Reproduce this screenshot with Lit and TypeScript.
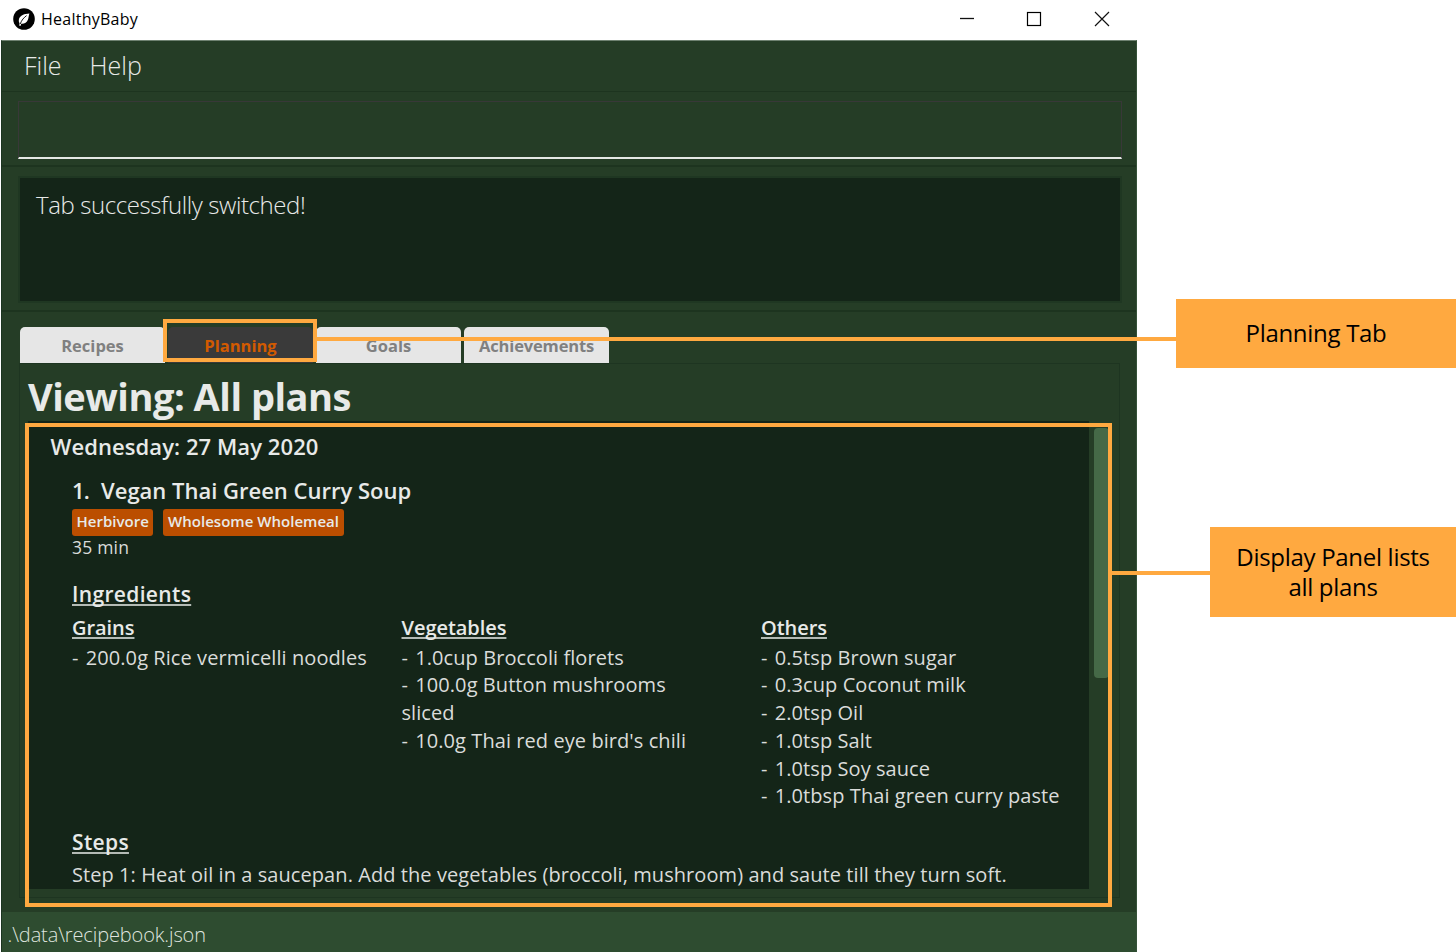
import { LitElement, html, css } from "lit";
import { customElement } from "lit/decorators.js";

interface Group {
  name: string;
  items: string[];
}

const TABS = ["Recipes", "Planning", "Goals", "Achievements"];
const TAGS = ["Herbivore", "Wholesome Wholemeal"];
const GROUPS: Group[] = [
  { name: "Grains", items: ["200.0g Rice vermicelli noodles"] },
  {
    name: "Vegetables",
    items: [
      "1.0cup Broccoli florets",
      "100.0g Button mushrooms sliced",
      "10.0g Thai red eye bird's chili",
    ],
  },
  {
    name: "Others",
    items: [
      "0.5tsp Brown sugar",
      "0.3cup Coconut milk",
      "2.0tsp Oil",
      "1.0tsp Salt",
      "1.0tsp Soy sauce",
      "1.0tbsp Thai green curry paste",
    ],
  },
];

@customElement("plan-card")
export class PlanCard extends LitElement {
  static styles = css`
    :host { display: block; }
    .name { display: flex; font-size: 22px; font-weight: 600; line-height: 30px; }
    .num { width: 29px; letter-spacing: -0.8px; }
    .tags { display: flex; gap: 10px; margin-top: 4.5px; }
    .tag {
      box-sizing: border-box; height: 26.5px; padding: 0 4.5px; border-radius: 3px;
      background: #bb4e00; font-size: 15px; font-weight: 600; line-height: 25px;
      white-space: nowrap; letter-spacing: 0.03px;
    }
    .time { font-size: 17.5px; line-height: 22px; letter-spacing: 0.2px; color: #dadcda; }
    .head {
      font-size: 21px; font-weight: 600; line-height: 30px; letter-spacing: 0.34px;
      margin-top: 21px;
    }
    .head, .cat {
      text-decoration: underline #b4bbb5; text-decoration-thickness: 2px;
      text-underline-offset: 2px; text-decoration-skip-ink: none;
    }
    .groups { display: grid; grid-template-columns: 329.5px 359.5px 1fr; margin-top: 5px; min-height: 213px; }
    .group { padding-right: 20px; }
    .group:nth-child(2) { padding-right: 45px; }
    .group:last-child { padding-right: 0; }
    .cat { font-size: 20px; font-weight: 600; line-height: 28px; margin-bottom: 2px; letter-spacing: -0.05px; }
    .item, .step { font-size: 20px; line-height: 27.8px; color: #dadcda; letter-spacing: 0.07px; }
    .dash { margin-right: 2px; }
    .step { white-space: nowrap; margin-top: 4px; }
    .steps { margin-top: 0; }
  `;
  render() {
    return html`
      <div class="name"><span class="num">1.</span><span>Vegan Thai Green Curry Soup</span></div>
      <div class="tags">${TAGS.map((t) => html`<span class="tag">${t}</span>`)}</div>
      <div class="time">35 min</div>
      <div class="head">Ingredients</div>
      <div class="groups">
        ${GROUPS.map(
          (g) => html`<div class="group">
            <div class="cat">${g.name}</div>
            ${g.items.map((i) => html`<div class="item"><span class="dash">-</span> ${i}</div>`)}
          </div>`
        )}
      </div>
      <div class="head steps">Steps</div>
      <div class="step">Step 1: Heat oil in a saucepan. Add the vegetables (broccoli, mushroom) and saute till they turn soft.</div>
    `;
  }
}

@customElement("app-root")
export class AppRoot extends LitElement {
  static styles = css`
    :host {
      display: block; position: relative; width: 1456px; height: 952px; overflow: hidden;
      background: #fff; font-family: "Open Sans", "Noto Sans", sans-serif; color: #e8eae8;
    }
    .window {
      box-sizing: border-box; width: 1136px; height: 952px; margin-left: 1px;
      display: flex; flex-direction: column; background: #253d26;
    }
    .titlebar {
      box-sizing: border-box; height: 40px; flex: none; display: flex; align-items: center;
      padding: 0 27px 2px 12px; background: #fff; color: #000;
    }
    .logo { width: 22px; height: 22px; }
    .apptitle { margin-left: 6px; font-size: 16px; letter-spacing: 0.25px; flex: 1; }
    .controls { display: flex; gap: 52px; }
    .controls svg { width: 16px; height: 16px; display: block; }
    .frame {
      flex: 1; min-height: 0; display: flex; flex-direction: column; box-sizing: border-box;
      border-left: 1px solid #1b3420; border-right: 1px solid #355238;
      border-top: 1px solid #6f8271;
    }
    .menubar {
      box-sizing: border-box; height: 51px; flex: none; display: flex; gap: 28px;
      padding-left: 22px; font-size: 25px; font-weight: 300; line-height: 49px;
      border-bottom: 1px solid #1d341f;
    }
    .command { box-sizing: border-box; height: 75px; flex: none; padding: 9px 14px 0 16px; border-bottom: 2px solid #1d341f; }
    .field {
      box-sizing: border-box; height: 58px; border: 1px solid #383838;
      border-bottom: 2px solid #e4e8e4;
    }
    .result { box-sizing: border-box; height: 145px; flex: none; padding: 9px 14px 0 16px; border-bottom: 2px solid #1d341f; }
    .message {
      box-sizing: border-box; height: 127px; border: 2px solid #1f3722; background: #142518;
      padding: 9px 0 0 16px; font-size: 24px; line-height: 36px; font-weight: 300;
      letter-spacing: -0.4px;
    }
    .content { flex: 1; min-height: 0; display: flex; flex-direction: column; padding: 15px 16px 14px 17px; }
    .tabs { display: flex; gap: 3px; padding-left: 1px; flex: none; }
    .tab {
      box-sizing: border-box; width: 145px; height: 36px; border-radius: 5px 5px 0 0;
      background: #e6e6e6; color: #808080; text-align: center; line-height: 37px;
      font-size: 16.5px; font-weight: 700;
    }
    .tab:last-child { letter-spacing: -0.15px; }
    .active { background: #3a3a3a; color: #d25a00; }
    .pane {
      flex: 1; min-height: 0; box-sizing: border-box; border: 1px solid #1e3521;
      display: flex; flex-direction: column; padding: 0 8px 8px 8px;
    }
    .title {
      height: 57px; flex: none; line-height: 65px; font-size: 38px; font-weight: 700;
      letter-spacing: -0.49px; white-space: nowrap;
    }
    .listrow { display: flex; flex: 1; min-height: 0; }
    .list { flex: none; width: 1061px; box-sizing: border-box; background: #142518; padding: 9.5px 0 0 22.5px; overflow: hidden; }
    .date { font-size: 22px; font-weight: 600; line-height: 30px; letter-spacing: 0.08px; }
    plan-card { margin: 14px 0 0 21.5px; }
    .bar { padding: 7px 0 0 5px; }
    .thumb { width: 15px; height: 250px; border-radius: 4px; background: #456947; }
    .status {
      height: 40px; flex: none; background: #2e4c30; padding-left: 5.5px; font-size: 20px;
      font-weight: 300; line-height: 45px; letter-spacing: -0.12px; color: #dfe4df;
    }
    .mark { position: absolute; box-sizing: border-box; border: 4px solid #ffa940; }
    .mark-tab { left: 163px; top: 319px; width: 154px; height: 43px; }
    .mark-list { left: 25px; top: 423px; width: 1087px; height: 484px; }
    .line { position: absolute; height: 4px; background: #ffa940; }
    .line-tab { left: 317px; top: 337px; width: 860px; }
    .line-list { left: 1112px; top: 571px; width: 99px; }
    .note {
      position: absolute; right: 0; display: flex; align-items: center; justify-content: center;
      box-sizing: border-box; background: #ffa940; color: #000; text-align: center;
      font-size: 24px; line-height: 30px; letter-spacing: -0.3px;
    }
    .note-tab { top: 299px; width: 280px; height: 69px; padding-bottom: 2px; }
    .note-list { top: 527px; width: 246px; height: 90px; }
  `;
  render() {
    return html`
      <div class="window">
        <div class="titlebar">
          <svg class="logo" viewBox="0 0 22 22">
            <circle cx="11" cy="11" r="10.8" fill="#000" />
            <path d="M16.4 5.4C11.500 5.600 7 7.200 6 11c-.4 1.700-.2 3 .5 4L6.300 17.800l1.200.2.700-2.200c3 .3 5.600-1 6.700-4 .8-2.200.8-4.400 1.500-6.400z" fill="#fff" />
            <path d="M13.600 7.600C11 9.500 8.600 12 7.200 16" fill="none" stroke="#000" stroke-width="0.9" />
          </svg>
          <span class="apptitle">HealthyBaby</span>
          <div class="controls">
            <svg viewBox="0 0 16 16"><path d="M2 7.500h14" stroke="#111" stroke-width="1.300" /></svg>
            <svg viewBox="0 0 16 16"><rect x="1.500" y="1.500" width="13" height="13" fill="none" stroke="#000" stroke-width="1.200" /></svg>
            <svg viewBox="0 0 16 16"><path d="M1 1l14 14M15 1L1 15" stroke="#111" stroke-width="1.200" /></svg>
          </div>
        </div>
        <div class="frame">
          <div class="menubar"><span>File</span><span>Help</span></div>
          <div class="command"><div class="field"></div></div>
          <div class="result"><div class="message">Tab successfully switched!</div></div>
          <div class="content">
            <div class="tabs">
              ${TABS.map((t) => html`<div class="tab ${t === "Planning" ? "active" : ""}">${t}</div>`)}
            </div>
            <div class="pane">
              <div class="title">Viewing: All plans</div>
              <div class="listrow">
                <div class="list">
                  <div class="date">Wednesday: 27 May 2020</div>
                  <plan-card></plan-card>
                </div>
                <div class="bar"><div class="thumb"></div></div>
              </div>
            </div>
          </div>
          <div class="status">.\\data\\recipebook.json</div>
        </div>
      </div>
      <div class="mark mark-tab"></div>
      <div class="mark mark-list"></div>
      <div class="line line-tab"></div>
      <div class="line line-list"></div>
      <div class="note note-tab">Planning Tab</div>
      <div class="note note-list">Display Panel lists<br />all plans</div>
    `;
  }
}
